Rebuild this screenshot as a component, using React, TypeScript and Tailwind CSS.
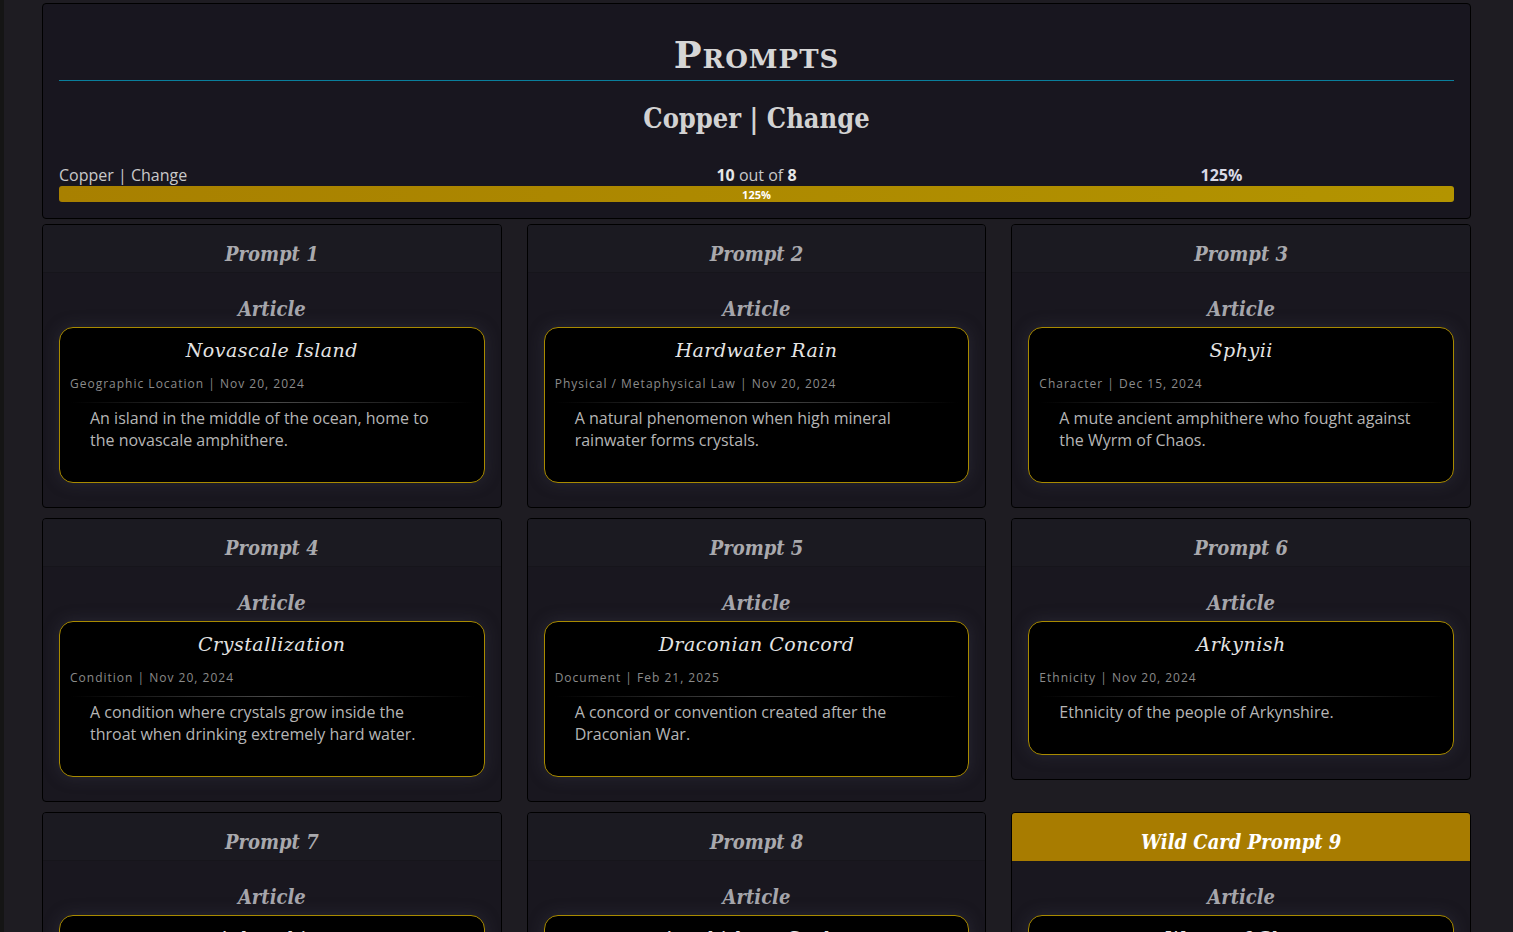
import React from 'react';

interface Prompt {
  label: string;
  wild?: boolean;
  title: string;
  category: string;
  date: string;
  text: string;
}

const prompts: Prompt[] = [
  { label: 'Prompt 1', title: 'Novascale Island', category: 'Geographic Location', date: 'Nov 20, 2024', text: 'An island in the middle of the ocean, home to the novascale amphithere.' },
  { label: 'Prompt 2', title: 'Hardwater Rain', category: 'Physical / Metaphysical Law', date: 'Nov 20, 2024', text: 'A natural phenomenon when high mineral rainwater forms crystals.' },
  { label: 'Prompt 3', title: 'Sphyii', category: 'Character', date: 'Dec 15, 2024', text: 'A mute ancient amphithere who fought against the Wyrm of Chaos.' },
  { label: 'Prompt 4', title: 'Crystallization', category: 'Condition', date: 'Nov 20, 2024', text: 'A condition where crystals grow inside the throat when drinking extremely hard water.' },
  { label: 'Prompt 5', title: 'Draconian Concord', category: 'Document', date: 'Feb 21, 2025', text: 'A concord or convention created after the Draconian War.' },
  { label: 'Prompt 6', title: 'Arkynish', category: 'Ethnicity', date: 'Nov 20, 2024', text: 'Ethnicity of the people of Arkynshire.' },
  { label: 'Prompt 7', title: 'Arkynshire', category: 'Settlement', date: 'Nov 20, 2024', text: 'A coastal town built on the cliffs of Novascale Island.' },
  { label: 'Prompt 8', title: 'Amphithere Scales', category: 'Material', date: 'Nov 20, 2024', text: 'Iridescent scales shed by amphitheres, prized by smiths.' },
  { label: 'Prompt 9', wild: true, title: 'Wyrm of Chaos', category: 'Species', date: 'Dec 15, 2024', text: 'An ancient dragon bound beneath the ocean floor.' },
];

const serif = "font-['DejaVu_Serif',serif]";
const serifCond = "font-['DejaVu_Serif_Condensed','DejaVu_Serif',serif] font-stretch-condensed";
const sans = "font-['Open_Sans',sans-serif]";

const PromptCard: React.FC<{ p: Prompt }> = ({ p }) => (
  <div className="bg-[#19171f] border border-black rounded-[4px] overflow-hidden">
    <div
      className={
        p.wild
          ? 'h-[48px] pt-[10px] flex items-center justify-center bg-[#a87c00] border-b border-[#a87c00]'
          : 'h-[48px] pt-[10px] flex items-center justify-center bg-[#1b1a21] border-b border-[#16151b]'
      }
    >
      <span className={`${serifCond} italic font-bold text-[20px] ${p.wild ? 'text-white' : 'text-[#a9a9ad]'}`}>
        {p.wild ? 'Wild Card ' + p.label : p.label}
      </span>
    </div>
    <div className="px-4 pt-[18px] pb-[24px]">
      <div className={`${serifCond} italic font-bold text-[20px] text-[#a5a5ab] text-center leading-[36px]`}>Article</div>
      <div className="bg-black border border-[#a88a00] rounded-[14px] px-[10px] pt-[7px] pb-[31px] shadow-[0_0_16px_rgba(70,70,90,0.35)]">
        <div className={`${serif} italic text-[19px] tracking-[0.5px] text-[#e4e4e4] text-center leading-[30px]`}>{p.title}</div>
        <div className={`${sans} text-[12px] tracking-[1px] text-[#8b8b8b] mt-[11px] leading-[16px]`}>
          {p.category} | {p.date}
        </div>
        <div className="h-px mt-[10px] bg-gradient-to-r from-transparent via-[#4a4a4a] to-transparent" />
        <p className={`${sans} text-[16px] leading-[22px] text-[#b5b5b5] ml-5 mr-[30px] mt-[4px]`}>{p.text}</p>
      </div>
    </div>
  </div>
);

export default function App() {
  return (
    <div className="min-h-screen bg-[#1e1c22] border-l-4 border-[#151515]">
      <div className="pl-[38px] pr-[42px] pt-[3px] pb-10">
        <div className="bg-[#18161f] border border-black rounded-[4px] px-4 pt-[30px] pb-4">
          <h1 className={`${serif} font-bold text-[37px] leading-[42px] text-[#d6d6d6] text-center [font-variant:small-caps] tracking-[1px] pb-[4px]`}>
            Prompts
          </h1>
          <div className="h-px bg-[#0a7f9c]" />
          <h2 className={`${serifCond} font-bold text-[27px] leading-[34px] text-[#d2d2d2] text-center mt-[21px]`}>
            Copper | Change
          </h2>
          <div className={`${sans} grid grid-cols-3 mt-[28px] text-[16px] leading-[22px] text-[#c9c9c9]`}>
            <div>Copper | Change</div>
            <div className="text-center">
              <span className="font-bold text-[#e6e6e6]">10</span> out of <span className="font-bold text-[#e6e6e6]">8</span>
            </div>
            <div className="text-center font-bold text-[#d9d9e6]">125%</div>
          </div>
          <div className="h-4 rounded-[3px] bg-gradient-to-r from-[#a88000] to-[#b39400] flex items-center justify-center">
            <span className={`${sans} text-[11px] font-bold text-white leading-none`}>125%</span>
          </div>
        </div>
        <div className="grid grid-cols-3 gap-x-[25px] gap-y-[10px] mt-[5px] items-start">
          {prompts.map((p) => (
            <PromptCard key={p.label} p={p} />
          ))}
        </div>
      </div>
    </div>
  );
}
